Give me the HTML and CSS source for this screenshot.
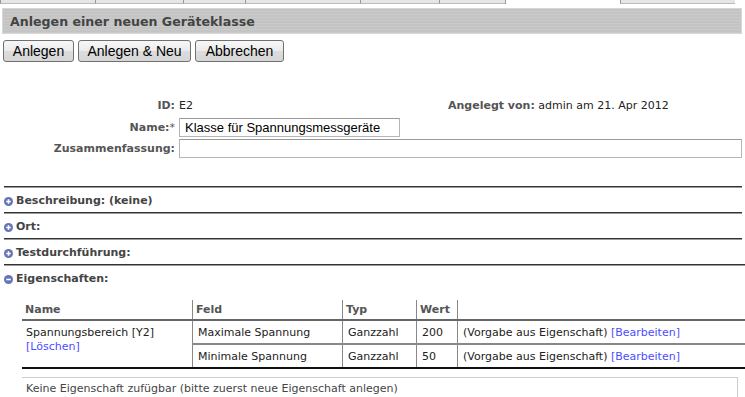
FILE: index.html
```html
<!DOCTYPE html>
<html lang="de">
<head>
  <meta charset="UTF-8" />
  <title>Anlegen einer neuen Geräteklasse</title>
  <link rel="stylesheet" href="styles.css">
</head>
<body>
  <div class="tabs">
    <span class="tab" style="width:95px"></span>
    <span class="tab" style="width:88px"></span>
    <span class="tab" style="width:62px"></span>
    <span class="tab" style="width:115px"></span>
    <span class="tab" style="width:79px"></span>
    <span class="tab" style="width:66px"></span>
    <span class="tab active" style="width:115px"></span>
    <span class="tab" style="width:115px"></span>
  </div>

  <div class="titlebar">Anlegen einer neuen Geräteklasse</div>

  <div class="buttons">
    <button class="btn btn-create">Anlegen</button>
    <button class="btn btn-new">Anlegen &amp; Neu</button>
    <button class="btn btn-cancel">Abbrechen</button>
  </div>

  <div class="meta">
    <div class="label">ID:</div>
    <div class="value first-row">
      <span>E2</span>
      <span class="created"><b>Angelegt von:</b> admin am 21. Apr 2012</span>
    </div>

    <div class="label">Name:<span class="req">*</span></div>
    <div class="value"><input type="text" class="field name-field" value="Klasse für Spannungsmessgeräte"></div>

    <div class="label">Zusammenfassung:</div>
    <div class="value"><input type="text" class="field summary-field"></div>
  </div>

  <div class="sections">
    <div class="section">
      <div class="section-head">
        <svg class="toggle" width="9" height="9" viewBox="0 0 9 9"><circle cx="4.5" cy="4.5" r="4.5" fill="#6474b6"/><path d="M2.2 4.5h4.6M4.5 2.2v4.6" stroke="#fff" stroke-width="1.6"/></svg>
        Beschreibung: (keine)
      </div>
    </div>
    <div class="section">
      <div class="section-head">
        <svg class="toggle" width="9" height="9" viewBox="0 0 9 9"><circle cx="4.5" cy="4.5" r="4.5" fill="#6474b6"/><path d="M2.2 4.5h4.6M4.5 2.2v4.6" stroke="#fff" stroke-width="1.6"/></svg>
        Ort:
      </div>
    </div>
    <div class="section">
      <div class="section-head">
        <svg class="toggle" width="9" height="9" viewBox="0 0 9 9"><circle cx="4.5" cy="4.5" r="4.5" fill="#6474b6"/><path d="M2.2 4.5h4.6M4.5 2.2v4.6" stroke="#fff" stroke-width="1.6"/></svg>
        Testdurchführung:
      </div>
    </div>
    <div class="section open">
      <div class="section-head">
        <svg class="toggle" width="9" height="9" viewBox="0 0 9 9"><circle cx="4.5" cy="4.5" r="4.5" fill="#6474b6"/><path d="M2.2 4.5h4.6" stroke="#fff" stroke-width="1.6"/></svg>
        Eigenschaften:
      </div>

      <table class="props">
        <thead>
          <tr>
            <th class="c-name">Name</th>
            <th class="c-field">Feld</th>
            <th class="c-type">Typ</th>
            <th class="c-value">Wert</th>
            <th class="c-rest"></th>
          </tr>
        </thead>
        <tbody>
          <tr class="first">
            <td rowspan="2" class="name-cell">Spannungsbereich [Y2]<br><a href="#">[Löschen]</a></td>
            <td>Maximale Spannung</td>
            <td>Ganzzahl</td>
            <td>200</td>
            <td>(Vorgabe aus Eigenschaft) <a href="#">[Bearbeiten]</a></td>
          </tr>
          <tr class="last">
            <td>Minimale Spannung</td>
            <td>Ganzzahl</td>
            <td>50</td>
            <td>(Vorgabe aus Eigenschaft) <a href="#">[Bearbeiten]</a></td>
          </tr>
        </tbody>
      </table>

      <div class="footer-box">Keine Eigenschaft zufügbar (bitte zuerst neue Eigenschaft anlegen)</div>
    </div>
  </div>
</body>
</html>
```

FILE: styles.css
```css
body {
  margin: 0;
  font-family: 'DejaVu Sans', Verdana, sans-serif;
  font-size: 11px;
  color: #222;
  background: #fff;
}

.tabs {
  display: flex;
  height: 4px;
}

.tab {
  box-sizing: border-box;
  height: 4px;
  background: #e6e6e6;
  border-left: 1px solid #999;
  border-bottom: 1px solid #bbb;
}

.tab.active {
  background: #fff;
  border-bottom: none;
}

.titlebar {
  box-sizing: border-box;
  height: 26px;
  margin: 4px 3px 0 2px;
  padding: 0 7px;
  line-height: 25px;
  font-size: 12.6px;
  font-weight: bold;
  color: #444;
  border: 1px solid #d6d6d6;
  background: repeating-linear-gradient(#c4c4c4 0, #c4c4c4 2px, #cacaca 2px, #cacaca 3px);
}

.buttons {
  display: flex;
  gap: 4px;
  margin: 6px 0 0 3px;
}

.btn {
  box-sizing: border-box;
  height: 22px;
  padding: 0;
  font-family: 'Liberation Sans', Arial, sans-serif;
  font-size: 14px;
  color: #000;
  border: 1px solid #707070;
  border-radius: 3px;
  background: linear-gradient(#f7f7f7, #ebebeb 50%, #dcdcdc 51%, #d6d6d6);
}

.btn-create { width: 71px; }
.btn-new { width: 113px; }
.btn-cancel { width: 89px; }

.meta {
  display: grid;
  grid-template-columns: 175px 1fr;
  column-gap: 4px;
  row-gap: 2px;
  margin-top: 34px;
  padding-right: 3px;
}

.label {
  text-align: right;
  font-weight: bold;
  color: #555;
  line-height: 19px;
}

.req {
  font-weight: normal;
}

.value {
  line-height: 19px;
}

.first-row {
  display: grid;
  grid-template-columns: 269px auto;
  margin-bottom: 1px;
}

.created b {
  color: #555;
}

.field {
  box-sizing: border-box;
  display: block;
  height: 19px;
  margin: 0;
  padding: 0 5px;
  border: 1px solid #b5b5b5;
  border-top-color: #999;
  font-family: 'Liberation Sans', Arial, sans-serif;
  font-size: 13px;
  color: #000;
}

.name-field { width: 221px; }
.summary-field { width: 563px; }

.sections {
  margin-top: 28px;
}

.section {
  margin: 0 3px 0 4px;
  border-top: 1px solid #333;
  box-shadow: inset 0 1px 0 #9a9a9a;
  height: 25px;
}

.section.open {
  height: auto;
  margin-right: 0;
}

.section-head {
  display: flex;
  align-items: center;
  gap: 3px;
  padding-top: 8px;
  line-height: 12px;
  font-weight: bold;
  color: #444;
}

.toggle {
  flex: none;
}

.props {
  margin: 15px 0 0 18px;
  width: 723px;
  border-collapse: collapse;
}

.props th {
  height: 18px;
  padding: 0 3px 1px;
  text-align: left;
  font-weight: bold;
  color: #555;
  vertical-align: middle;
  border-left: 1px solid #888;
  border-bottom: 2px solid #666;
}

.props th.c-name {
  border-left: none;
}

.c-name { width: 164px; }
.c-field { width: 143px; }
.c-type { width: 67px; }
.c-value { width: 34px; }

.props td {
  height: 22px;
  padding: 0 3px 0 5px;
  color: #222;
  border-left: 1px solid #888;
  border-bottom: 2px solid #888;
}

.props td.name-cell {
  border-left: none;
  vertical-align: top;
  padding: 5px 3px 0 4px;
  line-height: 14px;
}

.props tr.last td,
.props td.name-cell {
  border-bottom: 2px solid #111;
}

.props a {
  color: #4d4dff;
  text-decoration: none;
}

.footer-box {
  margin: 8px 7px 0 18px;
  padding: 4px 4px 0;
  height: 30px;
  border-top: 1px solid #ccc;
  border-right: 1px solid #ccc;
  color: #444;
}
```
